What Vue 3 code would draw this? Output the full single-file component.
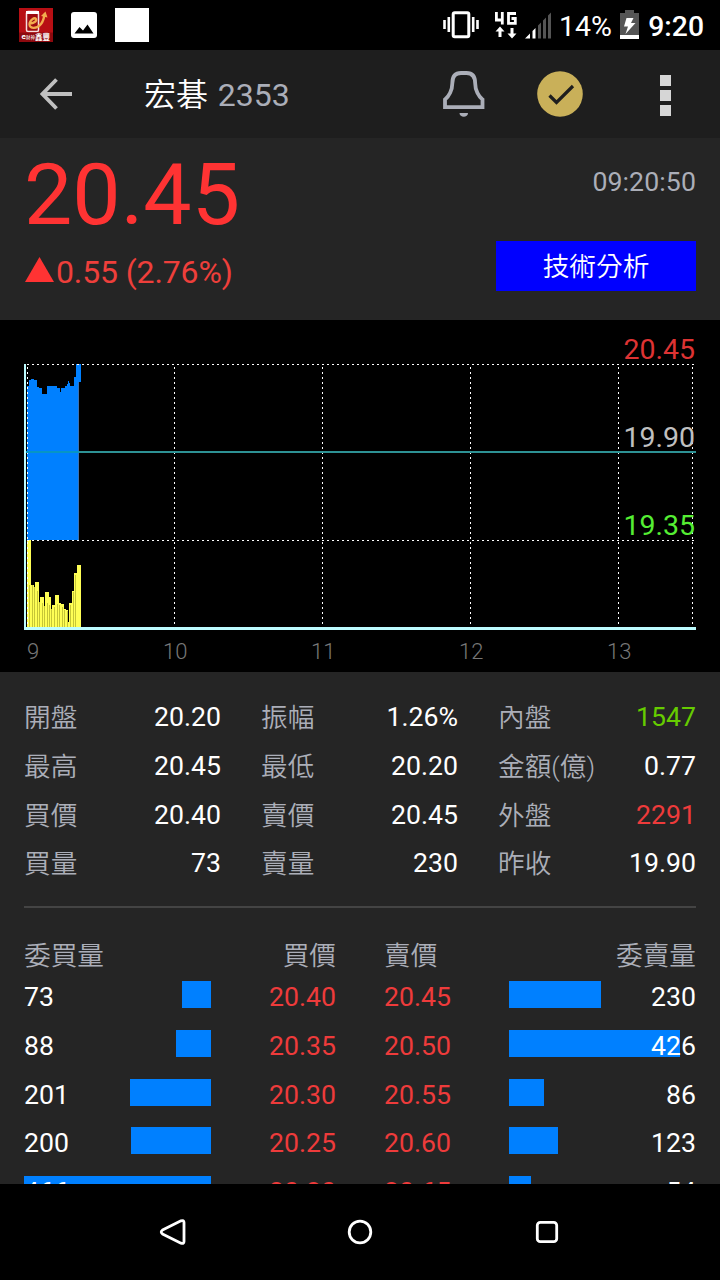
<script setup>
	import {
		ref,
		computed
	} from 'vue'

	const stock = ref({
		name: '宏碁',
		code: '2353',
		price: '20.45',
		change: '0.55 (2.76%)',
		time: '09:20:50'
	})

	const details = ref([
		{ label: '開盤', value: '20.20' },
		{ label: '振幅', value: '1.26%' },
		{ label: '內盤', value: '1547', color: 'green' },
		{ label: '最高', value: '20.45' },
		{ label: '最低', value: '20.20' },
		{ label: '金額(億)', value: '0.77' },
		{ label: '買價', value: '20.40' },
		{ label: '賣價', value: '20.45' },
		{ label: '外盤', value: '2291', color: 'red' },
		{ label: '買量', value: '73' },
		{ label: '賣量', value: '230' },
		{ label: '昨收', value: '19.90' }
	])

	const orders = ref([
		{ buyQty: 73, buy: '20.40', sell: '20.45', sellQty: 230 },
		{ buyQty: 88, buy: '20.35', sell: '20.50', sellQty: 426 },
		{ buyQty: 201, buy: '20.30', sell: '20.55', sellQty: 86 },
		{ buyQty: 200, buy: '20.25', sell: '20.60', sellQty: 123 },
		{ buyQty: 466, buy: '20.20', sell: '20.65', sellQty: 54 }
	])

	const maxQty = computed(() => Math.max(...orders.value.map(o => Math.max(o.buyQty, o.sellQty))))

	function barWidth(qty){
		return { width: (qty / maxQty.value * 100) + '%' }
	}

	// 成交量 [x, 寬, 高]
	const volumes = [
		[27, 4, 87], [31, 3, 42], [34, 1, 40], [35, 4, 45], [39, 1, 25], [40, 4, 30],
		[44, 1, 21], [45, 4, 35], [49, 2, 30], [51, 1, 18], [52, 3, 22], [55, 4, 32],
		[59, 2, 24], [61, 3, 23], [64, 2, 18], [66, 2, 17], [68, 1, 5], [69, 3, 24],
		[72, 2, 36], [74, 3, 54], [77, 4, 62]
	]
	const stripes = [
		[29, 42], [32, 42], [34, 40], [37, 36], [39, 25], [42, 24], [44, 21], [47, 24],
		[49, 22], [51, 18], [54, 20], [57, 23], [59, 22], [62, 20], [64, 17], [67, 16],
		[70, 22], [73, 35], [75, 52]
	]
	const hours = [
		{ x: 27, label: '9' },
		{ x: 163, label: '10' },
		{ x: 311, label: '11' },
		{ x: 459, label: '12' },
		{ x: 607, label: '13' }
	]
	const gridX = [27.5, 174.5, 322.5, 470.5, 618.5, 692.5]
</script>

<template>
	<div class="screen">
		<div class="status-bar">
			<svg class="app-icon" width="34" height="34" viewBox="0 0 34 34">
				<rect width="34" height="34" fill="#b80f14" />
				<rect x="7.500" y="3.500" width="12" height="20" rx="1.500" fill="#9d0b10" stroke="#f5dede" stroke-width="1.500" />
				<rect x="7" y="3" width="13" height="3" fill="#fff" />
				<path d="M10.500 15.500C15 15.500 18 13 17 11C15.500 9 10.500 12 10.500 16.500C10.500 21 18 21 22 16C24.500 13 25 10 25.500 6" fill="none" stroke="#f2ac4e" stroke-width="2.300" />
				<path d="M22 8L26.500 3.500L28.500 9.500Z" fill="#f2ac4e" />
				<rect y="24.500" width="34" height="9.500" fill="#8d090e" />
				<text x="2.500" y="31" class="logo-e">e</text>
				<text x="7" y="30.500" class="logo-small">財神</text>
				<text x="16" y="31.500" class="logo-big">鑫豐</text>
			</svg>
			<svg class="photo-icon" width="26" height="26" viewBox="0 0 26 26">
				<rect width="26" height="26" rx="3" fill="#fff" />
				<path d="M3.500 21.500L8.500 15L12 18.500L16.500 12.500L22.500 21.500Z" fill="#000" />
			</svg>
			<div class="blank-icon"></div>
			<svg class="vibrate-icon" width="36" height="28" viewBox="0 0 36 28">
				<rect x="10.200" y="1.700" width="15.600" height="24" rx="1.500" fill="none" stroke="#fff" stroke-width="3" />
				<path d="M5.800 6V21M1.500 9V18M30.200 6V21M34.500 9V18" stroke="#fff" stroke-width="2.600" />
			</svg>
			<svg class="net-icon" width="22" height="27" viewBox="0 0 22 27">
				<path d="M1.400 0V8H8M7.300 0V12.500M21 1.500H13.500V11.300H20.300V6.500H16.500" fill="none" stroke="#fff" stroke-width="2.800" />
				<path d="M5 14.500L9.500 19.500H6.500V25H3.500V19.500H.5ZM17 26.500L12.500 21.500H15.500V16H18.500V21.500H21.500Z" fill="#fff" />
			</svg>
			<svg class="signal-icon" width="27" height="27" viewBox="0 0 27 27">
				<path d="M0 26.500L5 21.500V26.500Z M7.500 19L10.500 16V26.500H7.500Z" fill="#fff" />
				<path d="M13 13.500L16 10.500V26.500H13ZM18 8.500L21 5.500V26.500H18ZM23 3.500L26 .5V26.500H23Z" fill="#555" />
			</svg>
			<span class="battery-text">14%</span>
			<svg class="battery-icon" width="19" height="29" viewBox="0 0 19 29">
				<path d="M0 3H5V0H14V3H19V29H0Z" fill="#555" />
				<rect y="25" width="19" height="4" fill="#fff" />
				<path d="M6.500 8H13.500L11 13H15.500L5.500 24L8 16.500H4Z" fill="#fff" />
			</svg>
			<span class="clock">9:20</span>
		</div>

		<div class="toolbar">
			<svg class="back" width="32" height="32" viewBox="0 0 32 32">
				<path d="M16.500 1.500L2.500 16L16.500 30.500M2.500 16H32" fill="none" stroke="#c0c0c0" stroke-width="3.800" />
			</svg>
			<div class="title">{{ stock.name }} <span class="code">{{ stock.code }}</span></div>
			<svg class="bell" width="42" height="47" viewBox="0 0 42 47">
				<path d="M2 36.200V28.500C6 25.500 9.300 19 9.300 12.500C9.300 5.500 12.500 2 18 2H23.500C29 2 32.200 5.500 32.200 12.500C32.200 19 35.500 25.500 39.500 28.500V36.200Z" fill="none" stroke="#abaeb8" stroke-width="3.800" />
				<path d="M16.500 42H25C25 47 16.500 47 16.500 42Z" fill="#abaeb8" />
			</svg>
			<svg class="check" width="46" height="46" viewBox="0 0 46 46">
				<circle cx="23" cy="23" r="22.800" fill="#c9b059" />
				<path d="M12.500 24.500L19.500 31.500L36 15" fill="none" stroke="#1e1e1e" stroke-width="3.200" />
			</svg>
			<div class="more">
				<i></i><i></i><i></i>
			</div>
		</div>

		<div class="quote">
			<div class="quote-left">
				<div class="price">{{ stock.price }}</div>
				<div class="change">
					<svg width="29" height="25" viewBox="0 0 29 25">
						<path d="M14.500 0L29 25H0Z" fill="#ff3333" />
					</svg>
					<span>{{ stock.change }}</span>
				</div>
			</div>
			<div class="quote-right">
				<div class="time">{{ stock.time }}</div>
				<button class="analysis">技術分析</button>
			</div>
		</div>

		<svg class="chart" width="720" height="352" viewBox="0 320 720 352">
			<path d="M27 540V386H29V380H31V379H34V380H37V387H39V388H42V394H47V386H57V388H60V392H61V388H65V386H67V384H68V381H69V383H70V386H74V377H76V364H81V382H79V540Z" fill="#0080ff" />
			<rect x="78.300" y="382" width="0.700" height="158" fill="#556c92" />
			<rect v-for="v in volumes" :key="v[0]" :x="v[0]" :y="627 - v[2]" :width="v[1]" :height="v[2]" fill="#ffff55" />
			<rect v-for="s in stripes" :key="'s' + s[0]" :x="s[0]" :y="627 - s[1]" width="1" :height="s[1]" fill="#c6c637" />
			<g class="grid">
				<path d="M27 364.500H696M27 540.500H696" />
				<path v-for="x in gridX" :key="x" :d="'M' + x + ' 367V626'" />
			</g>
			<rect x="24" y="451" width="672" height="2" fill="#2d9294" />
			<rect x="26" y="451" width="53" height="2" fill="#0795c4" />
			<rect x="24" y="364" width="2" height="266" fill="#bdfcff" />
			<rect x="24" y="627" width="672" height="3" fill="#bdfcff" />
			<g class="price-label">
				<text x="695" y="359" fill="#dd3333">20.45</text>
				<text x="695" y="447" fill="#c0c0c0">19.90</text>
				<text x="695" y="535" fill="#55ee33">19.35</text>
			</g>
			<text v-for="h in hours" :key="h.label" class="hour" :x="h.x" y="659">{{ h.label }}</text>
		</svg>

		<div class="info">
			<div class="details">
				<div v-for="d in details" :key="d.label" class="detail">
					<span class="label">{{ d.label }}</span>
					<span :class="d.color">{{ d.value }}</span>
				</div>
			</div>
			<div class="orders">
				<div class="order order-head">
					<span>委買量</span>
					<span class="buy">買價</span>
					<span class="sell">賣價</span>
					<span class="right">委賣量</span>
				</div>
				<div v-for="o in orders" :key="o.buy" class="order">
					<div class="qty">
						<div class="bar bar-buy" :style="barWidth(o.buyQty)"></div>
						<span class="num">{{ o.buyQty }}</span>
					</div>
					<span class="buy num red">{{ o.buy }}</span>
					<span class="sell num red">{{ o.sell }}</span>
					<div class="qty">
						<div class="bar" :style="barWidth(o.sellQty)"></div>
						<span class="num right">{{ o.sellQty }}</span>
					</div>
				</div>
			</div>
		</div>

		<div class="nav-bar">
			<svg width="28" height="28" viewBox="0 0 28 28">
				<path d="M22 2.800Q25 1.800 25 4.500V23.500Q25 26.200 22 25.200L3.500 16Q1 14 3.500 12Z" fill="none" stroke="#fff" stroke-width="2.800" stroke-linejoin="round" />
			</svg>
			<svg width="28" height="28" viewBox="0 0 28 28">
				<circle cx="14" cy="14" r="10.800" fill="none" stroke="#fff" stroke-width="2.800" />
			</svg>
			<svg width="28" height="28" viewBox="0 0 28 28">
				<rect x="4.300" y="4.300" width="19.400" height="19.400" rx="3" fill="none" stroke="#fff" stroke-width="2.800" />
			</svg>
		</div>
	</div>
</template>

<style>
	body {
		background: #000;
	}
</style>

<style scoped>
	.screen {
		width: 720px;
		height: 1280px;
		overflow: hidden;
		display: flex;
		flex-direction: column;
		background: #000;
		color: #fff;
		font-family: Roboto, "Noto Sans CJK TC", sans-serif;
		font-size: 26.67px;
	}

	.screen svg {
		display: block;
		flex-shrink: 0;
	}

	.status-bar {
		height: 50px;
		flex-shrink: 0;
		box-sizing: border-box;
		padding: 0 16px 0 19px;
		display: flex;
		align-items: center;
	}

	.logo-e {
		font-size: 8px;
		font-weight: bold;
		fill: #fff;
	}

	.logo-small {
		font-size: 4.5px;
		fill: #fff;
	}

	.logo-big {
		font-size: 7.5px;
		font-weight: bold;
		fill: #fff;
	}

	.photo-icon {
		margin-left: 18px;
	}

	.blank-icon {
		width: 34px;
		height: 34px;
		margin-left: 18px;
		background: #fff;
	}

	.vibrate-icon {
		margin-left: 294px;
	}

	.net-icon {
		margin-left: 16px;
	}

	.signal-icon {
		margin-left: 8px;
	}

	.battery-text {
		width: 61px;
		margin-left: 7px;
		font-size: 28.5px;
		line-height: 34px;
		white-space: nowrap;
		padding-top: 3px;
	}

	.battery-icon {
		margin: 0 0 1px;
	}

	.clock {
		margin-left: auto;
		font-size: 28.3px;
		line-height: 34px;
		font-weight: 500;
		padding-top: 3px;
	}

	.toolbar {
		height: 88px;
		flex-shrink: 0;
		box-sizing: border-box;
		padding: 0 49px 0 40px;
		background: #1e1e1e;
		display: flex;
		align-items: center;
	}

	.title {
		width: 299px;
		margin-left: 72px;
		padding-top: 1px;
		font-size: 32px;
		line-height: 40px;
		white-space: nowrap;
	}

	.code,
	.time,
	.label,
	.order-head {
		color: #abaeb8;
	}

	.check {
		margin-left: 52px;
	}

	.more {
		margin-left: auto;
		display: flex;
		flex-direction: column;
		gap: 4px;
		padding-top: 3px;
	}

	.more i {
		width: 11px;
		height: 11px;
		background: #d6d6d6;
	}

	.quote {
		height: 182px;
		flex-shrink: 0;
		box-sizing: border-box;
		padding: 0 24px;
		background: #252525;
		display: flex;
		justify-content: space-between;
	}

	.price {
		margin-top: 7px;
		font-size: 86px;
		line-height: 100px;
		color: #ff3333;
	}

	.change {
		display: flex;
		align-items: center;
		margin-top: 7px;
		padding-left: 1px;
		gap: 2px;
		font-size: 32px;
		line-height: 40px;
		letter-spacing: -0.12px;
		color: #ee3f3b;
	}

	.change svg {
		margin-bottom: 5px;
	}

	.quote-right {
		display: flex;
		flex-direction: column;
		align-items: flex-end;
	}

	.time {
		margin-top: 29px;
		line-height: 31px;
		letter-spacing: 0.1px;
	}

	.analysis {
		width: 200px;
		height: 50px;
		margin-top: 43px;
		padding: 0 0 3px;
		border: none;
		background: #0000ff;
		color: #fff;
		font: inherit;
	}

	.chart {
		background: #000;
	}

	.grid path {
		stroke: #fff;
		stroke-width: 1;
		stroke-dasharray: 2 3;
	}

	.price-label text {
		font-size: 28.5px;
		text-anchor: end;
	}

	.hour {
		font-size: 22px;
		font-weight: 300;
		fill: #777;
	}

	.info {
		height: 512px;
		flex-shrink: 0;
		box-sizing: border-box;
		padding: 21px 24px 0;
		background: #252525;
		overflow: hidden;
	}

	.details {
		display: grid;
		grid-template-columns: 197px 197px 198px;
		column-gap: 40px;
		grid-auto-rows: 48.67px;
		padding-bottom: 18.3px;
		border-bottom: 2px solid #444;
	}

	.detail {
		display: flex;
		justify-content: space-between;
		align-items: center;
		white-space: nowrap;
	}

	.label {
		padding-bottom: 3px;
	}

	.green {
		color: #66cc00;
	}

	.red {
		color: #ee3b3b;
	}

	.order {
		display: grid;
		grid-template-columns: 187px 125px 173px 187px;
		height: 48.85px;
		line-height: 31px;
	}

	.order-head {
		height: 40px;
		padding-top: 33px;
	}

	.buy {
		text-align: right;
	}

	.sell {
		padding-left: 48px;
	}

	.right {
		text-align: right;
	}

	.num {
		padding-top: 1px;
	}

	.qty {
		display: grid;
	}

	.qty .bar,
	.qty .num {
		grid-area: 1 / 1;
	}

	.bar {
		height: 27px;
		background: #0080ff;
	}

	.bar-buy {
		justify-self: end;
	}

	.nav-bar {
		height: 96px;
		flex-shrink: 0;
		display: flex;
		justify-content: center;
		align-items: center;
		gap: 159px;
	}

	.label,
	.order-head,
	.analysis,
	.title {
		font-weight: 350;
	}

	.code {
		margin-left: 2px;
		font-weight: 400;
	}
</style>
